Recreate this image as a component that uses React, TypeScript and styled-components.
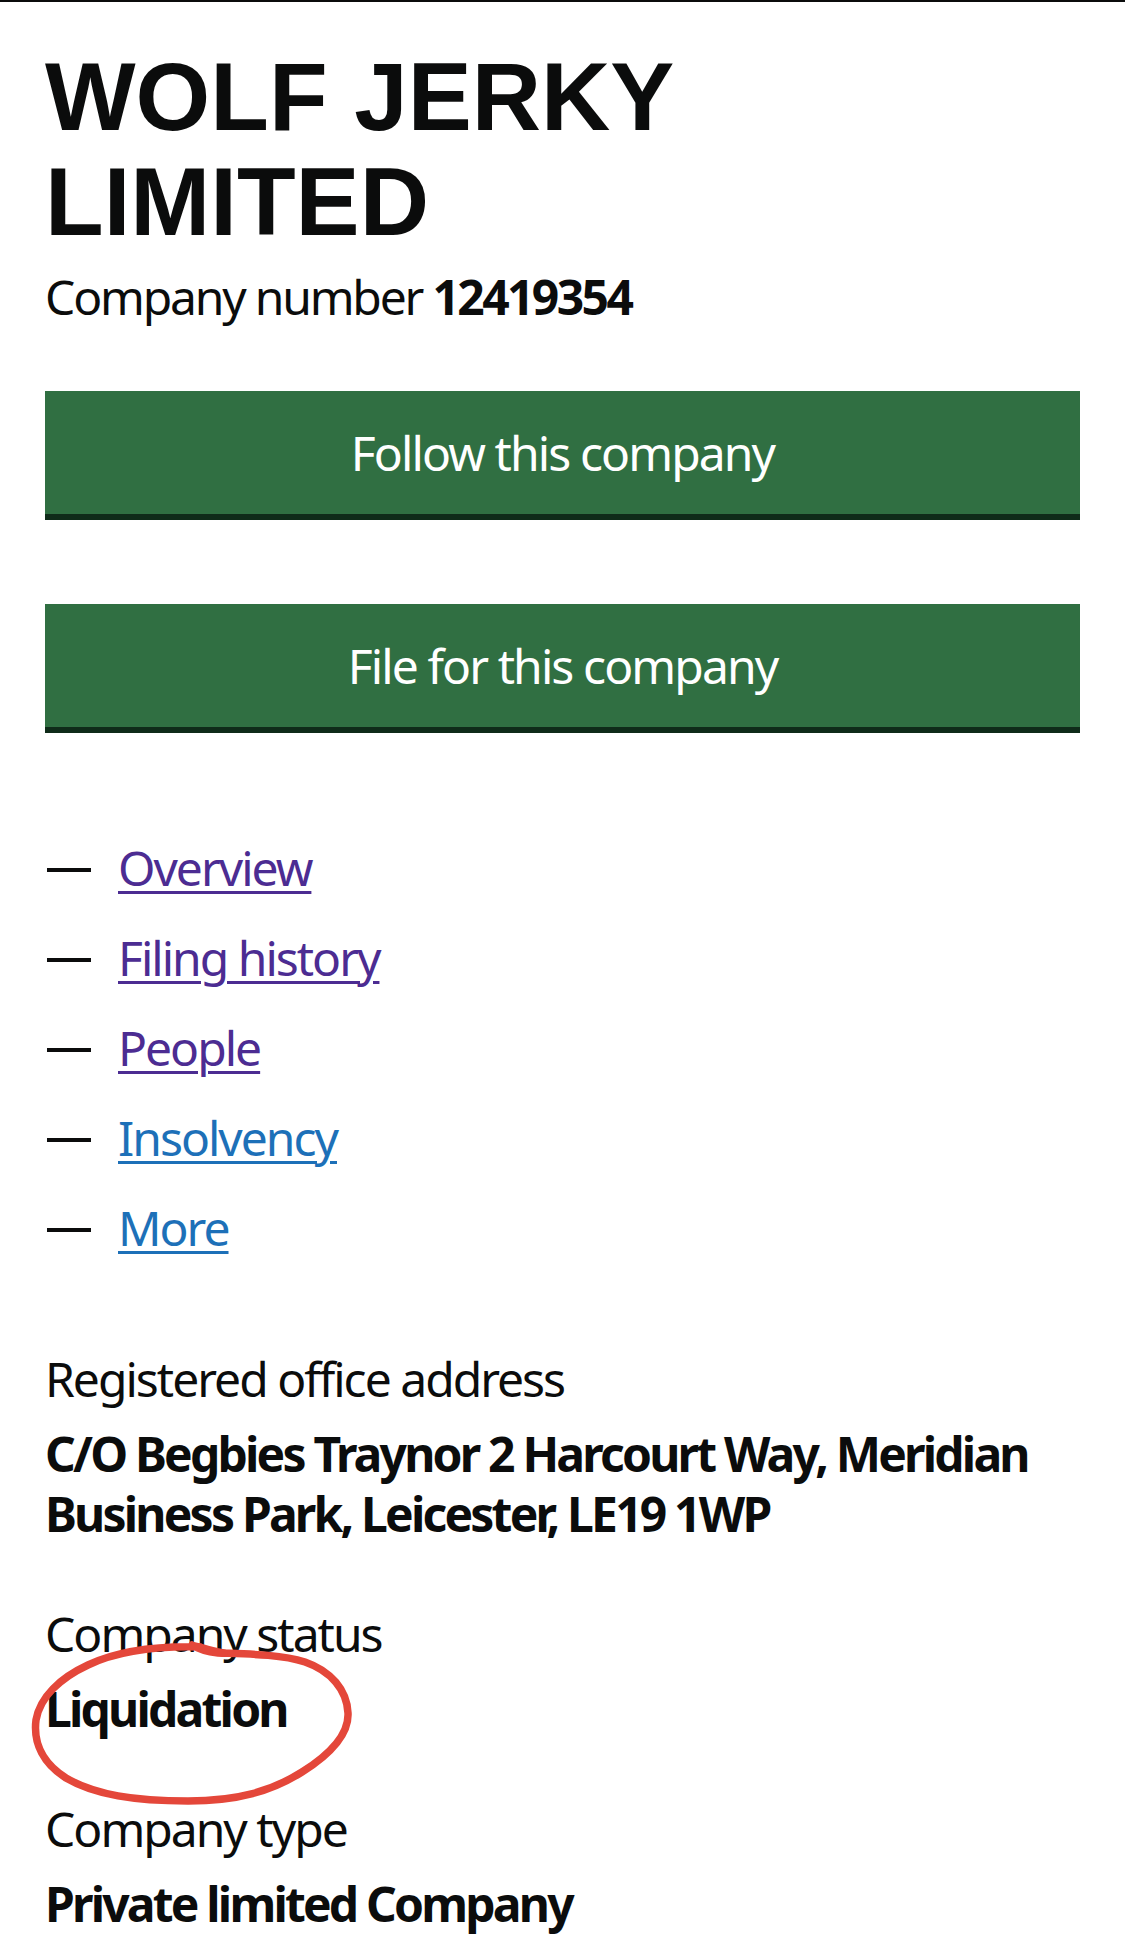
import React from 'react';
import styled, { createGlobalStyle } from 'styled-components';

const GlobalStyle = createGlobalStyle`
  html, body {
    margin: 0;
    padding: 0;
    background: #ffffff;
  }
  body {
    font-family: "Noto Sans", "Open Sans", sans-serif;
    color: #0b0c0c;
  }
`;

const links = [
  { label: 'Overview', visited: true },
  { label: 'Filing history', visited: true },
  { label: 'People', visited: true },
  { label: 'Insolvency', visited: false },
  { label: 'More', visited: false },
];

const App = () => {
  return (
    <>
      <GlobalStyle />
      <Page>
        <Heading>WOLF JERKY LIMITED</Heading>
        <CompanyNumber>
          Company number <strong>12419354</strong>
        </CompanyNumber>

        <ButtonGroup>
          <Button type="button">Follow this company</Button>
          <Button type="button">File for this company</Button>
        </ButtonGroup>

        <NavList>
          {links.map((item) => (
            <NavItem key={item.label}>
              <Dash />
              <NavLink href="#" $visited={item.visited}>
                {item.label}
              </NavLink>
            </NavItem>
          ))}
        </NavList>

        <Field $first>
          <Label>Registered office address</Label>
          <Value>C/O Begbies Traynor 2 Harcourt Way, Meridian Business Park, Leicester, LE19 1WP</Value>
        </Field>

        <Field>
          <Label>Company status</Label>
          <Value>Liquidation</Value>
          {/* hand-drawn red ring, coordinates are page pixels */}
          <Scribble viewBox="25 1632 340 178" width="340" height="178">
            <path
              d="M 200 1647
                 C 160 1646, 118 1651, 88 1665
                 C 60 1678, 40 1697, 36 1720
                 C 33 1744, 44 1764, 66 1778
                 C 95 1795, 135 1801, 188 1801
                 C 238 1801, 272 1791, 302 1772
                 C 332 1753, 349 1734, 348 1713
                 C 347 1690, 331 1671, 305 1662
                 C 280 1654, 245 1654, 218 1653
                 C 208 1652, 198 1649, 192 1645"
            />
            <path d="M 194 1646 C 205 1648, 214 1652, 224 1653" />
          </Scribble>
        </Field>

        <Field>
          <Label>Company type</Label>
          <Value>Private limited Company</Value>
        </Field>
      </Page>
    </>
  );
};

export default App;

const Page = styled.main`
  display: flex;
  flex-direction: column;
  min-height: 1958px;
  padding: 0 45px;
  border-top: 2px solid #0b0c0c;
  box-sizing: border-box;
`;

const Heading = styled.h1`
  margin: 42px 0 13px;
  max-width: 700px;
  font-family: "Liberation Sans", Arial, sans-serif;
  font-size: 96px;
  line-height: 105px;
  font-weight: 700;
  color: #0b0c0c;
`;

const CompanyNumber = styled.p`
  margin: 0;
  font-size: 48px;
  line-height: 60px;
  letter-spacing: -2.2px;
  strong {
    font-weight: 700;
    letter-spacing: -2.6px;
  }
`;

const ButtonGroup = styled.div`
  display: flex;
  flex-direction: column;
  gap: 90px;
  margin-top: 64px;
`;

const Button = styled.button`
  display: flex;
  align-items: center;
  justify-content: center;
  width: 100%;
  height: 123px;
  padding: 0 30px;
  border: 0;
  border-radius: 0;
  background: #306f42;
  box-shadow: 0 6px 0 #0f2b19;
  color: #ffffff;
  font-family: "Noto Sans", "Open Sans", sans-serif;
  font-size: 48px;
  letter-spacing: -1.9px;
  cursor: pointer;
`;

const NavList = styled.ul`
  display: flex;
  flex-direction: column;
  gap: 30px;
  margin: 111px 0 0;
  padding: 0;
  list-style: none;
`;

const NavItem = styled.li`
  display: flex;
  align-items: center;
  gap: 27px;
  height: 60px;
  font-size: 48px;
  line-height: 60px;
`;

const Dash = styled.span`
  display: block;
  flex: none;
  width: 44px;
  height: 4px;
  margin: 4px 0 0 2px;
  background: #0b0c0c;
`;

const NavLink = styled.a<{ $visited: boolean }>`
  color: ${({ $visited }) => ($visited ? '#4c2c92' : '#1d70b8')};
  letter-spacing: -2px;
  text-decoration: underline;
  text-decoration-thickness: 3px;
  text-underline-offset: 5px;
`;

const Field = styled.section<{ $first?: boolean }>`
  position: relative;
  margin-top: ${({ $first }) => ($first ? '91px' : '60px')};
`;

const Label = styled.p`
  margin: 0;
  font-size: 48px;
  line-height: 60px;
  letter-spacing: -2px;
`;

const Value = styled.p`
  margin: 15px 0 0;
  font-size: 48px;
  line-height: 60px;
  font-weight: 700;
  letter-spacing: -2.8px;
`;

const Scribble = styled.svg`
  position: absolute;
  left: -20px;
  top: 28px;
  overflow: visible;
  pointer-events: none;
  path {
    fill: none;
    stroke: #e4473a;
    stroke-width: 7.5;
    stroke-linecap: round;
    stroke-linejoin: round;
  }
`;
